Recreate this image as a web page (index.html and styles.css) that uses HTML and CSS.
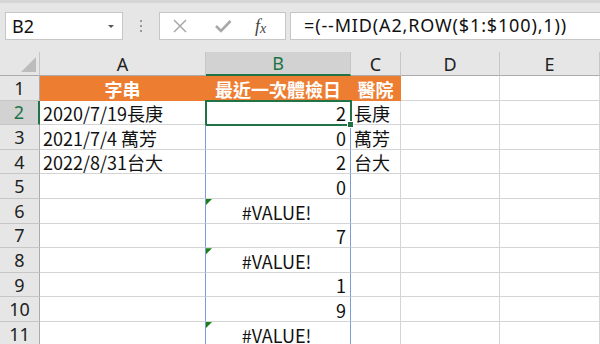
FILE: index.html
```html
<!DOCTYPE html>
<html lang="zh-Hant">
<head>
  <meta charset="UTF-8">
  <title>Sheet1</title>
  <link rel="stylesheet" href="styles.css">
</head>
<body>
  <div class="toolbar">
    <div class="name-box">
      <span class="name-text">B2</span>
      <span class="caret"></span>
    </div>
    <div class="grip"><span></span><span></span><span></span></div>
    <div class="fn-box">
      <svg class="fn-cancel" width="16" height="16" viewBox="0 0 16 16">
        <path d="M2 2 L14 14 M14 2 L2 14" stroke="#a8a8a8" stroke-width="1.5" fill="none"/>
      </svg>
      <svg class="fn-enter" width="18" height="16" viewBox="0 0 18 16">
        <path d="M2 8 L7 13 L16.5 3" stroke="#a8a8a8" stroke-width="2.6" fill="none"/>
      </svg>
      <span class="fx">f<sub>x</sub></span>
    </div>
    <div class="formula">=(--MID(A2,ROW($1:$100),1))</div>
  </div>

  <div class="sheet">
    <!-- column headers -->
    <div class="corner"><span class="corner-tri"></span></div>
    <div class="col-h">A</div>
    <div class="col-h sel">B</div>
    <div class="col-h">C</div>
    <div class="col-h">D</div>
    <div class="col-h">E</div>

    <!-- row 1 -->
    <div class="row-h">1</div>
    <div class="cell title">字串</div>
    <div class="cell title">最近一次體檢日</div>
    <div class="cell title">醫院</div>
    <div class="cell"></div>
    <div class="cell"></div>

    <!-- row 2 -->
    <div class="row-h sel">2</div>
    <div class="cell a">2020/7/19長庚</div>
    <div class="cell b num active">2</div>
    <div class="cell">長庚</div>
    <div class="cell"></div>
    <div class="cell"></div>

    <!-- row 3 -->
    <div class="row-h">3</div>
    <div class="cell a">2021/7/4 萬芳</div>
    <div class="cell b num">0</div>
    <div class="cell">萬芳</div>
    <div class="cell"></div>
    <div class="cell"></div>

    <!-- row 4 -->
    <div class="row-h">4</div>
    <div class="cell a">2022/8/31台大</div>
    <div class="cell b num">2</div>
    <div class="cell">台大</div>
    <div class="cell"></div>
    <div class="cell"></div>

    <!-- row 5 -->
    <div class="row-h">5</div>
    <div class="cell a"></div>
    <div class="cell b num">0</div>
    <div class="cell"></div>
    <div class="cell"></div>
    <div class="cell"></div>

    <!-- row 6 -->
    <div class="row-h">6</div>
    <div class="cell a"></div>
    <div class="cell b err">#VALUE!</div>
    <div class="cell"></div>
    <div class="cell"></div>
    <div class="cell"></div>

    <!-- row 7 -->
    <div class="row-h">7</div>
    <div class="cell a"></div>
    <div class="cell b num">7</div>
    <div class="cell"></div>
    <div class="cell"></div>
    <div class="cell"></div>

    <!-- row 8 -->
    <div class="row-h">8</div>
    <div class="cell a"></div>
    <div class="cell b err">#VALUE!</div>
    <div class="cell"></div>
    <div class="cell"></div>
    <div class="cell"></div>

    <!-- row 9 -->
    <div class="row-h">9</div>
    <div class="cell a"></div>
    <div class="cell b num">1</div>
    <div class="cell"></div>
    <div class="cell"></div>
    <div class="cell"></div>

    <!-- row 10 -->
    <div class="row-h">10</div>
    <div class="cell a"></div>
    <div class="cell b num">9</div>
    <div class="cell"></div>
    <div class="cell"></div>
    <div class="cell"></div>

    <!-- row 11 -->
    <div class="row-h">11</div>
    <div class="cell a"></div>
    <div class="cell b err">#VALUE!</div>
    <div class="cell"></div>
    <div class="cell"></div>
    <div class="cell"></div>
  </div>
</body>
</html>
```

FILE: styles.css
```css
html, body {
  margin: 0;
  padding: 0;
  height: 100%;
  overflow: hidden;
  background: #fff;
  font-family: "Noto Sans", "Noto Sans CJK TC", sans-serif;
  color: #222;
}

/* === formula bar === */
.toolbar {
  height: 52px;
  box-sizing: border-box;
  background: #e6e6e6;
  border-top: 3px solid #d6d6d6;
  padding-top: 9px;
  display: flex;
  align-items: flex-start;
}
.name-box {
  margin-left: 5px;
  width: 118px;
  height: 28px;
  box-sizing: border-box;
  background: #fff;
  border: 1px solid #c6c6c6;
  display: flex;
  align-items: center;
  justify-content: space-between;
  padding: 0 8px 0 6px;
}
.name-text {
  font-size: 18px;
  color: #111;
}
.caret {
  width: 0;
  height: 0;
  border-left: 3px solid transparent;
  border-right: 3px solid transparent;
  border-top: 3px solid #555;
}
.grip {
  width: 36px;
  height: 28px;
  display: flex;
  flex-direction: column;
  align-items: center;
  justify-content: center;
  gap: 3px;
}
.grip span {
  width: 2px;
  height: 2px;
  background: #9a9a9a;
}
.fn-box {
  width: 127px;
  height: 28px;
  box-sizing: border-box;
  background: #fff;
  border: 1px solid #c6c6c6;
  display: flex;
  align-items: center;
  padding-left: 12px;
}
.fn-enter {
  margin-left: 26px;
}
.fx {
  margin-left: 23px;
  font-family: "Liberation Serif", serif;
  font-style: italic;
  font-size: 18px;
  color: #444;
}
.fx sub {
  font-size: 14px;
  vertical-align: -1px;
}
.formula {
  flex: 1;
  margin-left: 4px;
  height: 28px;
  box-sizing: border-box;
  background: #fff;
  border: 1px solid #c6c6c6;
  border-right: none;
  padding-left: 13px;
  font-size: 18px;
  letter-spacing: 0.85px;
  line-height: 25px;
  color: #111;
  white-space: nowrap;
}

/* === grid === */
.sheet {
  display: grid;
  grid-template-columns: 40px 166px 145px 50px 99px 100px;
  grid-template-rows: 24px;
  grid-auto-rows: 24.6px;
}
.corner {
  background: #e6e6e6;
  border-right: 1px solid #c6c6c6;
  border-bottom: 1px solid #ababab;
  box-sizing: border-box;
  display: flex;
  align-items: flex-end;
  justify-content: flex-end;
  padding: 0 3px 3px 0;
}
.corner-tri {
  width: 15px;
  height: 15px;
  background: #bcbcbc;
  clip-path: polygon(100% 0, 100% 100%, 0 100%);
}
.col-h {
  background: #e6e6e6;
  border-right: 1px solid #c6c6c6;
  border-bottom: 1px solid #ababab;
  box-sizing: border-box;
  display: flex;
  align-items: center;
  justify-content: center;
  font-size: 18px;
  color: #222;
}
.col-h.sel {
  background: #d2d2d2;
  color: #217346;
  border-bottom: 2px solid #217346;
}
.row-h {
  background: #e6e6e6;
  border-right: 1px solid #ababab;
  border-bottom: 1px solid #c6c6c6;
  box-sizing: border-box;
  display: flex;
  align-items: center;
  justify-content: center;
  font-size: 18px;
  color: #222;
}
.row-h.sel {
  background: #d2d2d2;
  color: #217346;
  border-right: 2px solid #217346;
}
.cell {
  position: relative;
  box-sizing: border-box;
  border-right: 1px solid #d4d4d4;
  border-bottom: 1px solid #d4d4d4;
  display: flex;
  align-items: flex-end;
  padding: 0 3px;
  font-family: "Noto Sans CJK TC", sans-serif;
  font-size: 18px;
  line-height: 22px;
  color: #111;
  white-space: nowrap;
}
.cell.title {
  background: #ed7d31;
  border-right-color: #ed7d31;
  border-bottom-color: #ed7d31;
  color: #fff;
  font-weight: bold;
  justify-content: center;
}
.cell.a {
  border-right-color: #7d9bd4;
}
.cell.b {
  border-right-color: #7d9bd4;
}
.cell.num {
  justify-content: flex-end;
  padding-right: 4px;
}
.cell.err {
  justify-content: center;
  padding-right: 6px;
}
.cell.err::before {
  content: "";
  position: absolute;
  left: 0;
  top: 0;
  width: 6px;
  height: 6px;
  background: #1a7f1a;
  clip-path: polygon(0 0, 100% 0, 0 100%);
}
.cell.active {
  outline: 2px solid #217346;
  outline-offset: -1px;
}
.cell.active::after {
  content: "";
  position: absolute;
  right: -4px;
  bottom: -4px;
  width: 5px;
  height: 5px;
  background: #217346;
  border: 1px solid #fff;
  z-index: 2;
}
```
